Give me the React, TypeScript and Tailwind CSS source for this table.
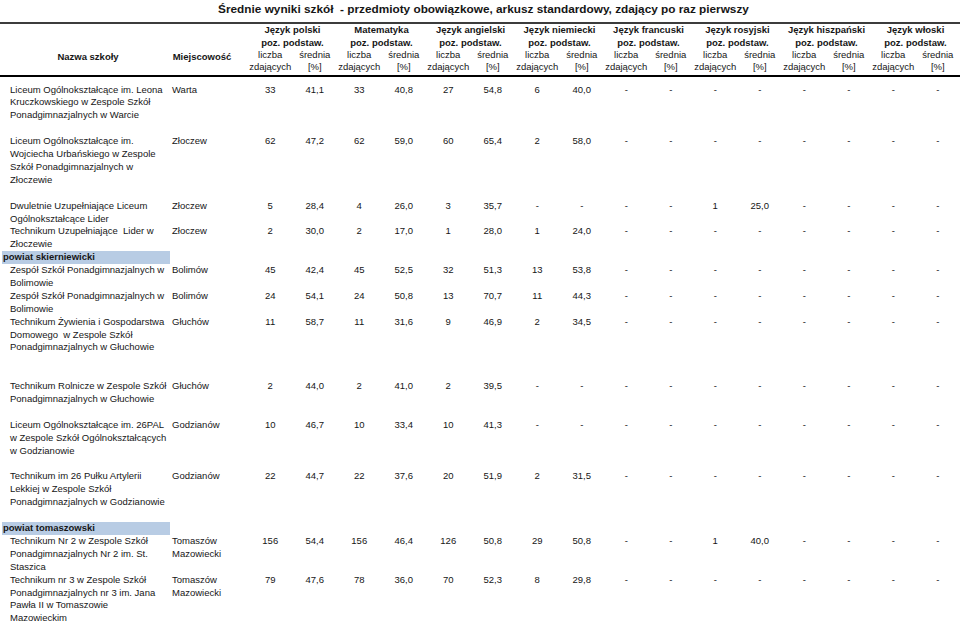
import React from "react";

// Wyniki szkół – zestawienie wg powiatów
type SchoolRow = {
  kind: "school";
  name: string[];
  town: string[];
  values: string[];
  lines: 2 | 3 | 4 | 5;
};

type BandRow = { kind: "band"; label: string };

const languages = [
  "Język polski",
  "Matematyka",
  "Język angielski",
  "Język niemiecki",
  "Język francuski",
  "Język rosyjski",
  "Język hiszpański",
  "Język włoski",
];

const dash8 = ["-", "-", "-", "-", "-", "-", "-", "-"];

const rows: (SchoolRow | BandRow)[] = [
  {
    kind: "school",
    name: ["Liceum Ogólnokształcące im. Leona", "Kruczkowskiego w Zespole Szkół", "Ponadgimnazjalnych w Warcie"],
    town: ["Warta"],
    values: ["33", "41,1", "33", "40,8", "27", "54,8", "6", "40,0", ...dash8],
    lines: 4,
  },
  {
    kind: "school",
    name: ["Liceum Ogólnokształcące im.", "Wojciecha Urbańskiego w Zespole", "Szkół Ponadgimnazjalnych w", "Złoczewie"],
    town: ["Złoczew"],
    values: ["62", "47,2", "62", "59,0", "60", "65,4", "2", "58,0", ...dash8],
    lines: 5,
  },
  {
    kind: "school",
    name: ["Dwuletnie Uzupełniające Liceum", "Ogólnokształcące Lider"],
    town: ["Złoczew"],
    values: ["5", "28,4", "4", "26,0", "3", "35,7", "-", "-", "-", "-", "1", "25,0", "-", "-", "-", "-"],
    lines: 2,
  },
  {
    kind: "school",
    name: ["Technikum Uzupełniające  Lider w", "Złoczewie"],
    town: ["Złoczew"],
    values: ["2", "30,0", "2", "17,0", "1", "28,0", "1", "24,0", ...dash8],
    lines: 2,
  },
  { kind: "band", label: "powiat skierniewicki" },
  {
    kind: "school",
    name: ["Zespół Szkół Ponadgimnazjalnych w", "Bolimowie"],
    town: ["Bolimów"],
    values: ["45", "42,4", "45", "52,5", "32", "51,3", "13", "53,8", ...dash8],
    lines: 2,
  },
  {
    kind: "school",
    name: ["Zespół Szkół Ponadgimnazjalnych w", "Bolimowie"],
    town: ["Bolimów"],
    values: ["24", "54,1", "24", "50,8", "13", "70,7", "11", "44,3", ...dash8],
    lines: 2,
  },
  {
    kind: "school",
    name: ["Technikum Żywienia i Gospodarstwa", "Domowego  w Zespole Szkół", "Ponadgimnazjalnych w Głuchowie"],
    town: ["Głuchów"],
    values: ["11", "58,7", "11", "31,6", "9", "46,9", "2", "34,5", ...dash8],
    lines: 5,
  },
  {
    kind: "school",
    name: ["Technikum Rolnicze w Zespole Szkół", "Ponadgimnazjalnych w Głuchowie"],
    town: ["Głuchów"],
    values: ["2", "44,0", "2", "41,0", "2", "39,5", "-", "-", ...dash8],
    lines: 3,
  },
  {
    kind: "school",
    name: ["Liceum Ogólnokształcące im. 26PAL", "w Zespole Szkół Ogólnokształcących", "w Godzianowie"],
    town: ["Godzianów"],
    values: ["10", "46,7", "10", "33,4", "10", "41,3", "-", "-", ...dash8],
    lines: 4,
  },
  {
    kind: "school",
    name: ["Technikum im 26 Pułku Artylerii", "Lekkiej w Zespole Szkół", "Ponadgimnazjalnych w Godzianowie"],
    town: ["Godzianów"],
    values: ["22", "44,7", "22", "37,6", "20", "51,9", "2", "31,5", ...dash8],
    lines: 4,
  },
  { kind: "band", label: "powiat tomaszowski" },
  {
    kind: "school",
    name: ["Technikum Nr 2 w Zespole Szkół", "Ponadgimnazjalnych Nr 2 im. St.", "Staszica"],
    town: ["Tomaszów", "Mazowiecki"],
    values: ["156", "54,4", "156", "46,4", "126", "50,8", "29", "50,8", "-", "-", "1", "40,0", "-", "-", "-", "-"],
    lines: 3,
  },
  {
    kind: "school",
    name: ["Technikum nr 3 w Zespole Szkół", "Ponadgimnazjalnych nr 3 im. Jana", "Pawła II w Tomaszowie", "Mazowieckim"],
    town: ["Tomaszów", "Mazowiecki"],
    values: ["79", "47,6", "78", "36,0", "70", "52,3", "8", "29,8", ...dash8],
    lines: 4,
  },
];

const rowHeight: Record<number, string> = {
  2: "h-[25.8px]",
  3: "h-[38.7px]",
  4: "h-[51.6px]",
  5: "h-[64.5px]",
};

const cols = "grid grid-cols-[170px_78px_repeat(16,44.5px)]";

function HeaderBlock({ label }: { label: string }) {
  return (
    <div className="flex flex-col w-[89px] leading-[12px]">
      <div className="text-center font-bold">{label}</div>
      <div className="text-center font-bold mt-[1px]">poz. podstaw.</div>
      <div className="flex">
        <div className="w-[44.5px] text-center">
          liczba
          <br />
          zdających
        </div>
        <div className="w-[44.5px] text-center">
          średnia
          <br />
          [%]
        </div>
      </div>
    </div>
  );
}

function School({ row }: { row: SchoolRow }) {
  return (
    <div className={`${cols} ${rowHeight[row.lines]}`}>
      <div className="pl-[10px]">
        {row.name.map((l, i) => (
          <div key={i} className="whitespace-pre">{l}</div>
        ))}
      </div>
      <div className="pl-[2px]">
        {row.town.map((t, i) => (
          <div key={i} className="whitespace-pre">{t}</div>
        ))}
      </div>
      {row.values.map((v, i) => (
        <div key={i} className="text-center">{v}</div>
      ))}
    </div>
  );
}

export default function App() {
  return (
    <div className="w-[960px] h-[622px] overflow-hidden bg-white text-[#161616] font-['Liberation_Sans',Arial,sans-serif] text-[9.5px]">
      <div className="h-[22px] leading-[19px] text-center font-bold text-[11.8px] pl-[7px] whitespace-pre">
        Średnie wyniki szkół  - przedmioty obowiązkowe, arkusz standardowy, zdający po raz pierwszy
      </div>
      <div className="border-t-2 border-b-2 border-t-[#3c3c3c] border-b-black h-[55px] flex">
        <div className="w-[170px] pt-[26px] pl-[6px] text-center font-bold leading-[13px]">Nazwa szkoły</div>
        <div className="w-[78px] pt-[26px] pr-[14px] text-center font-bold leading-[13px]">Miejscowość</div>
        {languages.map((l) => (
          <HeaderBlock key={l} label={l} />
        ))}
      </div>
      <div className="pt-[6.5px] leading-[12.9px]">
        {rows.map((r, i) =>
          r.kind === "band" ? (
            <div key={i} className="h-[12.9px] ml-[2px] w-[168px] bg-[#b8cce4] pl-[1px] font-bold">
              {r.label}
            </div>
          ) : (
            <School key={i} row={r} />
          )
        )}
      </div>
    </div>
  );
}
